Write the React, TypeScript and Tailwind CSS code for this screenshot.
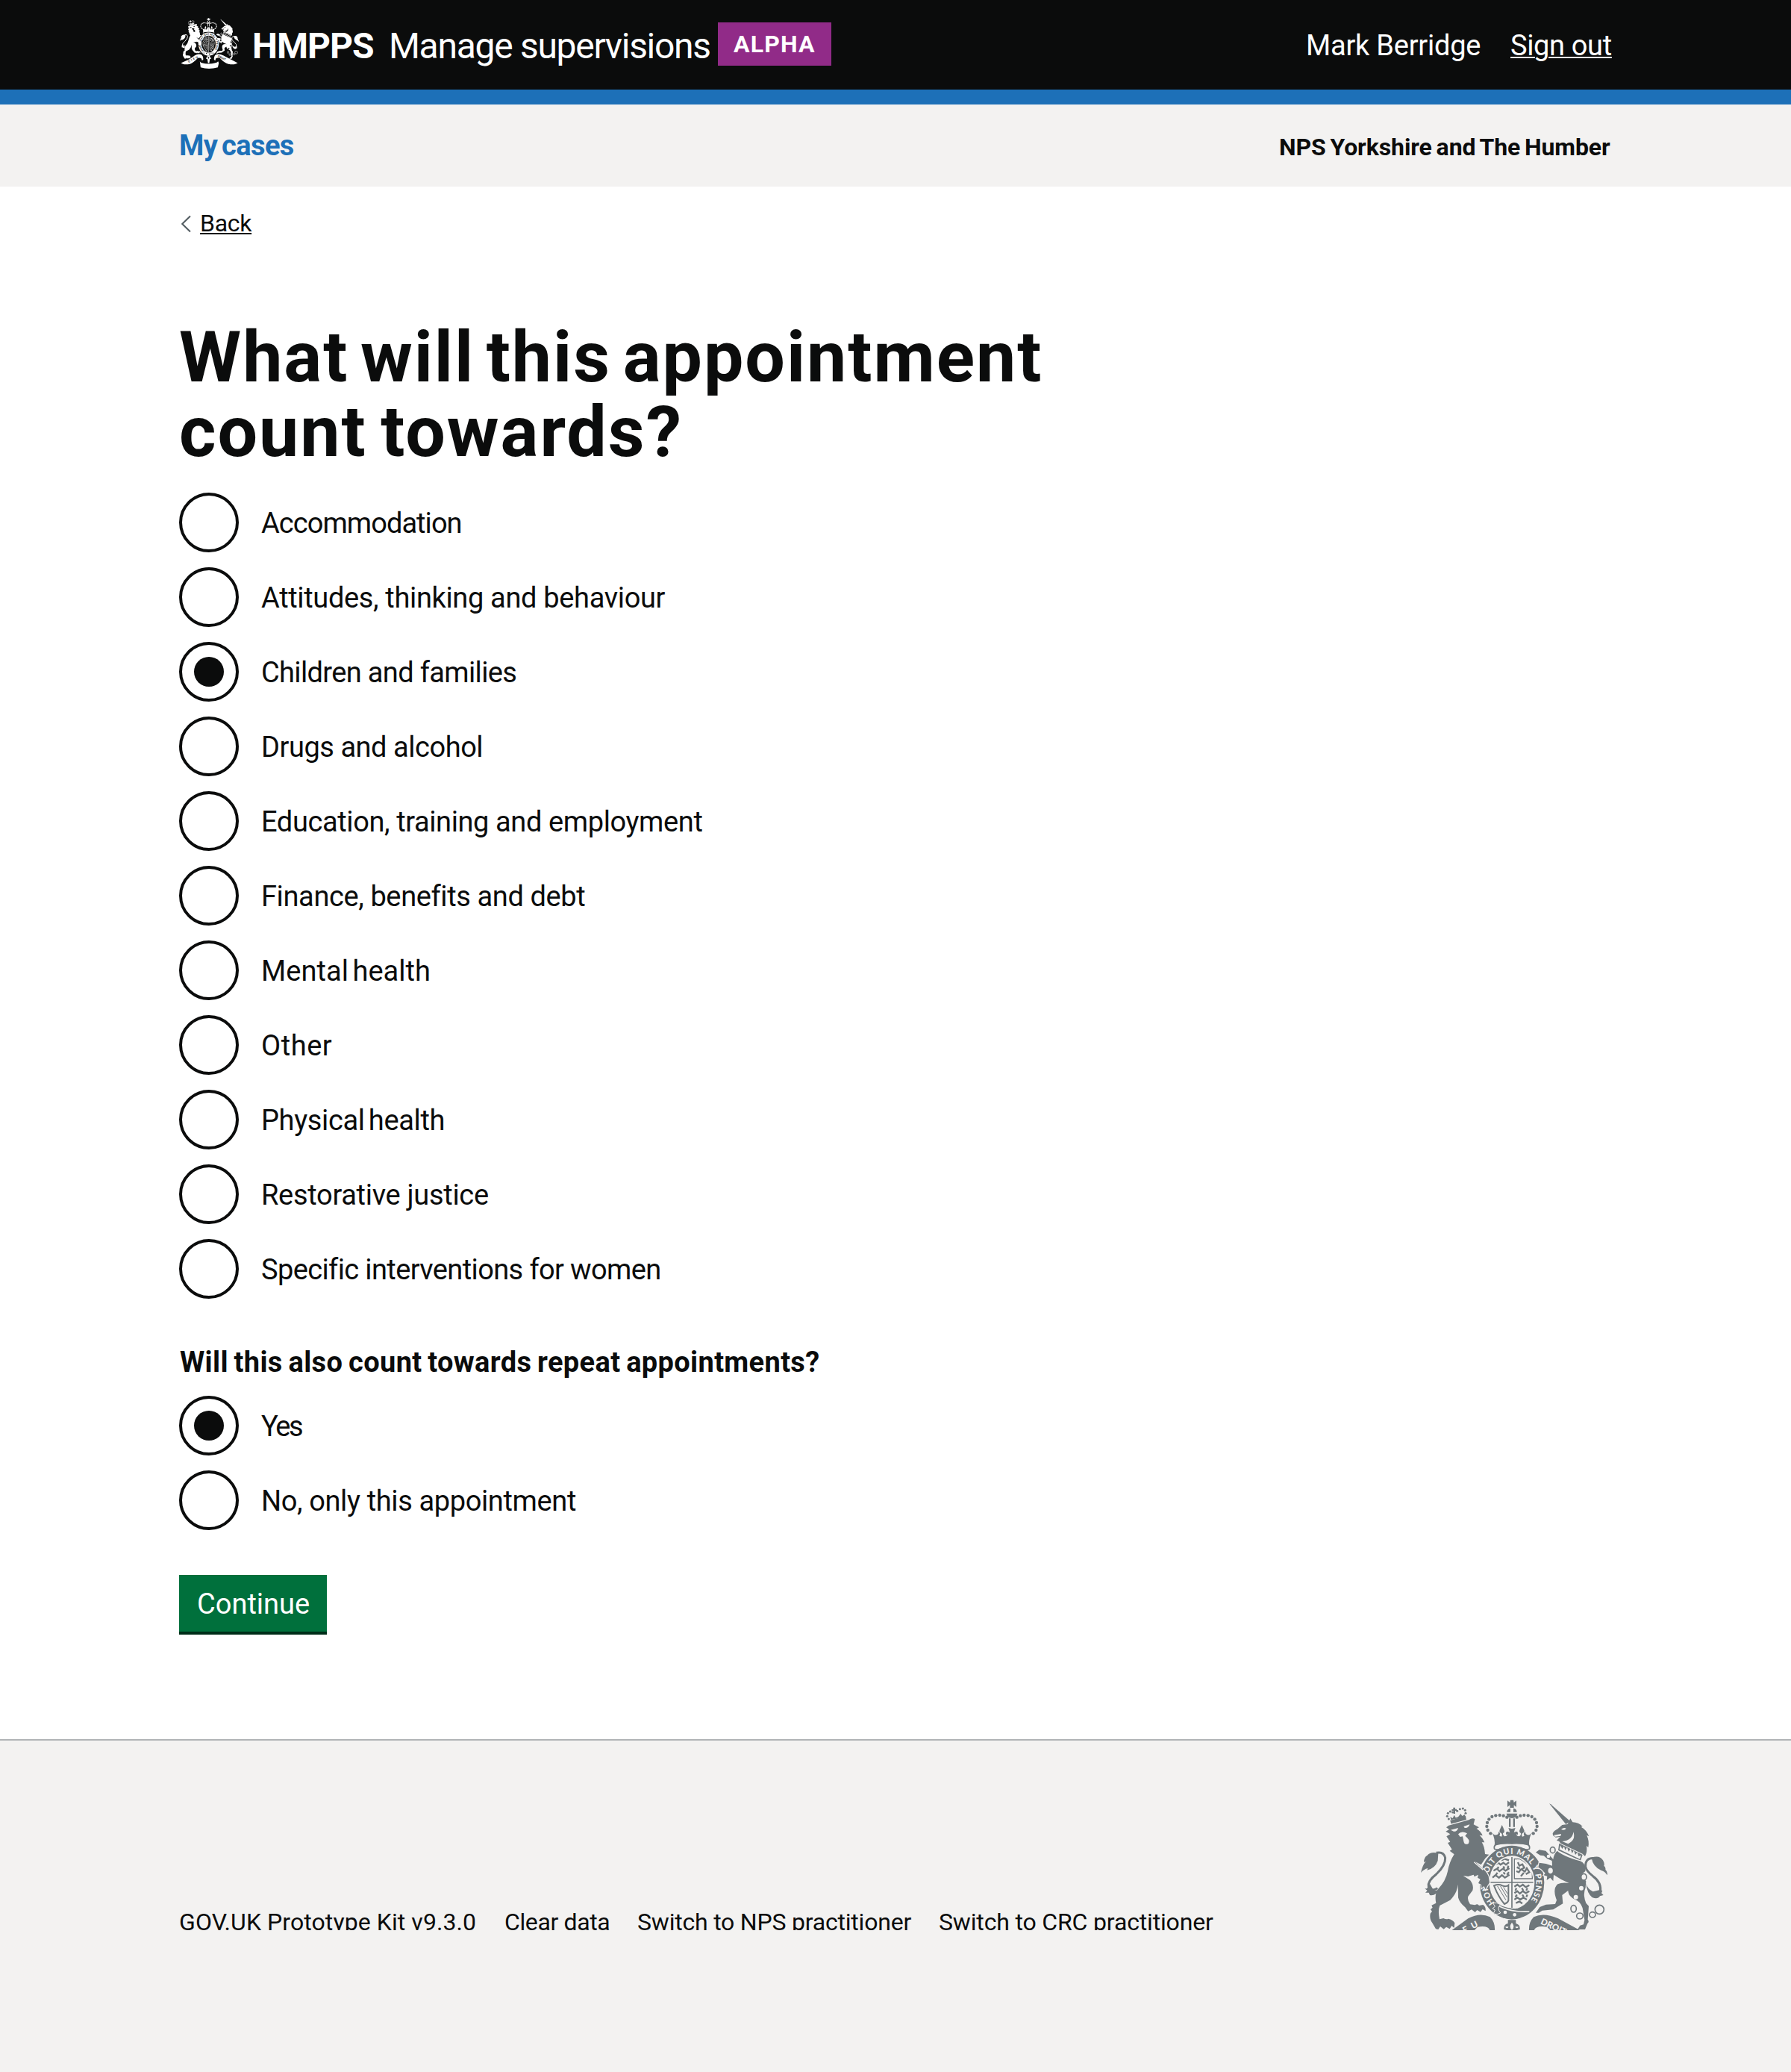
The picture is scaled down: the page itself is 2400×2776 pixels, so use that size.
type Choice = { label: string; tracking: string; checked?: boolean };

const needs: Choice[] = [
  { label: "Accommodation", tracking: "tracking-[-0.95px]" },
  { label: "Attitudes, thinking and behaviour", tracking: "tracking-[-0.34px]" },
  { label: "Children and families", tracking: "tracking-[-0.65px]", checked: true },
  { label: "Drugs and alcohol", tracking: "tracking-[-0.46px]" },
  { label: "Education, training and employment", tracking: "tracking-[-0.39px]" },
  { label: "Finance, benefits and debt", tracking: "tracking-[-0.38px]" },
  { label: "Mental health", tracking: "tracking-[0.05px] [word-spacing:-4px]" },
  { label: "Other", tracking: "tracking-[0.55px]" },
  { label: "Physical health", tracking: "tracking-[-0.35px] [word-spacing:-4px]" },
  { label: "Restorative justice", tracking: "tracking-[-0.3px]" },
  { label: "Specific interventions for women", tracking: "tracking-[-0.62px]" },
];

const repeats: Choice[] = [
  { label: "Yes", tracking: "tracking-[-2.4px]", checked: true },
  { label: "No, only this appointment", tracking: "tracking-[-0.37px]" },
];

function Radios({ items }: { items: Choice[] }) {
  return (
    <div className="flex flex-col gap-5">
      {items.map((c) => (
        <label key={c.label} className="flex h-20 gap-[30px]">
          <span className="flex size-20 shrink-0 items-center justify-center rounded-full border-4 border-[#0b0c0c]">
            {c.checked && <span className="size-10 rounded-full bg-[#0b0c0c]" />}
          </span>
          <span className={"text-[38px] leading-[82px] whitespace-nowrap " + c.tracking}>{c.label}</span>
        </label>
      ))}
    </div>
  );
}

// Beads along the left arch of the central crown; the right arch is their mirror image.
const beads = [
  [352, 200], [341, 187], [337, 172], [339, 157], [346, 143], [358, 133], [373, 128], [389, 127], [404, 129], [418, 135],
];

function HalfCrown() {
  return (
    <>
      {beads.map(([x, y]) => (
        <circle key={x + "-" + y} cx={x} cy={y} r="6.5" />
      ))}
      <path d="M358 196 Q364 208 376 206 Q386 203 384 192 Q394 198 388 210 L396 213 Q402 203 394 198 Q386 196 389 186 Q394 176 398 166 Q404 178 407 187 Q410 196 402 199 Q400 206 408 212 Q420 212 420 203 L415 206 Q411 194 420 192 L430 196 L424 178 L439 182 V243 Q400 240 368 249 Q372 225 358 196Z" />
    </>
  );
}

function RoyalArms({ id, paper, className }: { id: string; paper: string; className: string }) {
  return (
    <svg viewBox="72 64 750 648" className={className} fill="currentColor" aria-hidden="true">
      <defs>
        <path id={id + "-garter"} d="M369 479 A98 115 0 1 1 507 478" />
        <path id={id + "-dieu"} d="M182 636 L322 564" />
        <path id={id + "-droit"} d="M551 563 L720 640" />
        <clipPath id={id + "-shield"}>
          <ellipse cx="438" cy="397" rx="86" ry="102" />
        </clipPath>
      </defs>

      {/* garter and quartered shield */}
      <ellipse cx="438" cy="397" rx="130" ry="148" />
      <ellipse cx="438" cy="397" rx="91" ry="107" fill={paper} />
      <text fill={paper} fontFamily="Lato" fontWeight="900" fontSize="32">
        <textPath href={"#" + id + "-garter"} textLength="500" lengthAdjust="spacing">
          HONI SOIT QUI MAL Y PENSE
        </textPath>
      </text>
      <g clipPath={"url(#" + id + "-shield)"} fill="none" stroke="currentColor">
        <path strokeWidth="5" d="M438 285 V505 M345 397 H535" />
        <path strokeWidth="7" d="M372 326 l12 -8 l8 8 l12 -8 l10 8 l12 -10 M364 350 l14 -8 l10 10 l14 -10 l10 8 l16 -10 M360 378 l12 -10 l14 10 l12 -10 l12 10 l18 -12 M384 334 l-4 10 M404 332 l4 10 M424 330 l-4 12 M380 358 l-6 8 M404 356 l6 8 M426 356 l-8 10 M396 308 l12 -6 l18 6" />
        <path strokeWidth="7" d="M448 414 l12 -8 l10 8 l12 -8 l12 10 l14 -8 M448 440 l12 -8 l10 10 l12 -10 l12 8 l14 -8 M448 466 l12 -8 l12 8 l12 -8 l14 8 M456 420 l-4 10 M478 420 l6 10 M500 420 l-4 10 M458 446 l-6 10 M480 446 l6 10 M500 446 l-4 10 M454 480 l14 -6 l12 8" />
        <path strokeWidth="4" d="M448 302 V382 H520 V352 Q506 320 470 303 Z" />
        <path strokeWidth="7" d="M462 316 l6 14 l12 -6 l8 14 l-12 6 l14 10 l8 -14 l10 16 l-14 8 M474 344 l-8 12 l-10 -4 M486 358 l-12 14 M458 336 l12 6" />
        <path strokeWidth="6" d="M366 410 Q384 402 400 410 Q414 416 424 408 V470 Q420 480 408 484 Q384 456 366 410Z" />
        <path strokeWidth="3" d="M380 412 L414 468 M392 412 L418 456 M404 416 L420 442" />
      </g>
      <path d="M380 484 Q430 508 500 506 L508 518 Q470 548 430 545 Q396 540 374 524Z" />
      <path fill="none" stroke={paper} strokeWidth="5" d="M378 488 Q430 518 508 514" />
      <path stroke={paper} strokeWidth="3" d="M362 480 Q378 476 392 486 Q376 500 392 520 Q378 530 364 522 L370 508 L360 502 L370 494Z" />
      <circle cx="411" cy="517" r="7" fill={paper} />
      <circle cx="449" cy="527" r="7" fill={paper} />

      {/* lion: crown, head, body */}
      <path d="M190 148 L252 130 L255 146 L194 164Z" />
      <path d="M193 146 L190 134 L200 139 L206 126 L212 137 L222 134 L232 121 L238 130 L248 124 L252 134Z" />
      {[[178, 131], [181, 119], [190, 112], [200, 115], [218, 110], [229, 102], [241, 100], [250, 107], [252, 119], [184, 142]].map(([x, y]) => (
        <circle key={x + "-" + y} cx={x} cy={y} r="4.6" />
      ))}
      <path d="M202 96 h8 v6 h6 v7 h-6 v12 h-7 v-12 h-7 v-6 h6z" />
      <path
        stroke={paper}
        strokeWidth="7"
        paintOrder="stroke"
        d="M174 176 L184 168 L265 146 Q280 136 289 143 L284 164 L306 176 L296 181 Q314 192 320 209 L308 207 Q322 220 328 236 L317 236 Q328 252 330 283 L346 285 L331 300 L314 326 L291 314 L318 340 Q334 350 344 372 L348 398 L340 410 L332 425 L326 412 L316 420 L315 406 L303 400 L311 384 L300 378 L303 366 L287 374 L284 366 L262 373 L242 370 L270 388 Q286 408 280 429 L262 453 Q258 468 270 485 L290 488 Q300 480 306 490 L322 487 Q334 494 332 512 L320 505 L312 516 L298 508 L290 517 L276 506 L262 513 L250 497 Q228 480 222 458 L221 405 Q218 440 190 468 L148 490 Q140 510 147 545 L163 541 Q175 548 182 543 Q200 546 208 560 L206 580 L196 571 L188 584 L174 576 L164 585 L150 574 L142 586 L132 584 L118 560 Q106 545 110 522 L117 513 L111 506 L119 498 L115 489 L133 480 Q126 446 141 424 Q172 392 180 352 Q186 316 206 284 L188 270 L197 264 L180 238 L190 234 L175 212 L190 203 L172 192 L186 184Z"
      />
      <path fill={paper} d="M192 186 L222 178 Q218 194 204 192Z M244 172 L268 164 Q264 180 248 178Z M222 203 Q236 188 258 200 L250 210 Q272 226 264 240 Q248 250 244 232 L240 212 L230 214Z" />
      <path fill="none" stroke={paper} strokeWidth="4" d="M286 315 L322 347" />

      {/* lion's tail */}
      <path fill="none" stroke="currentColor" strokeWidth="9" d="M139 420 Q112 436 103 414 Q98 392 134 364 Q172 328 170 298 Q164 272 134 278" />
      <path d="M142 280 Q112 272 98 288 Q84 296 84 316 L92 312 Q78 328 72 358 Q84 344 100 340 L97 348 Q130 340 140 310Z" />
      <path d="M108 402 L96 422 L88 422 L98 430 L90 438 L104 438 L108 448 Q132 452 146 428 L124 430Z" />

      {/* central crown */}
      <path d="M420 68 L430 76 L432 66 H444 L446 76 L456 68 V94 L446 86 V97 H430 V86 L420 94Z" />
      <path d="M418 112 Q420 101 432 99 V114 H418Z M444 99 Q457 101 458 114 H444Z" />
      <path d="M416 120 H460 Q458 138 438 139 Q418 138 416 120Z" />
      <path d="M426 140 h7 v34 h-7z M443 140 h7 v34 h-7z" />
      <HalfCrown />
      <g transform="translate(876 0) scale(-1 1)">
        <HalfCrown />
      </g>
      <path fill="none" stroke="currentColor" strokeWidth="5" d="M374 244 Q364 252 368 263 Q380 268 392 262 M502 244 Q512 252 508 263 Q496 268 484 262" />

      {/* unicorn: horn, head, body */}
      <path d="M588 80 L594 83 L673 152 L655 163Z" />
      <path d="M602 200 Q606 190 622 182 L640 166 L662 163 L673 140 L682 155 Q706 156 722 172 L716 174 Q736 184 748 211 L739 208 Q750 232 745 256 L738 250 Q742 274 732 292 L722 282 L634 240 L628 232 L618 228 L632 214 L614 216 L603 208Z" />
      <path fill={paper} d="M636 184 Q646 174 656 180 Q650 190 636 184Z M640 232 Q682 228 685 194 Q696 226 664 242Z M606 207 L636 202 L634 210 L612 213Z" />
      <path d="M628 240 L722 286 L714 310 L624 268Z" />
      <path fill={paper} d="M633 248 L640 262 L648 252 L652 268 L660 256 L666 274 L674 262 L680 280 L687 268 L693 286 L701 276 L706 292 L716 288 L711 303 L629 264Z" />
      <path
        stroke={paper}
        strokeWidth="7"
        paintOrder="stroke"
        d="M620 270 Q640 290 712 311 Q738 322 733 352 L716 366 L736 392 L734 418 Q722 446 736 480 L747 492 L743 546 Q750 556 742 562 L732 586 H702 L712 570 L726 566 L730 548 L722 500 Q714 474 692 466 Q664 452 664 430 L640 448 L643 482 L604 506 L560 510 L546 519 H534 L550 496 L575 486 L612 484 L618 468 Q600 424 622 404 Q640 396 668 400 Q634 386 606 366 L604 392 L592 378 L578 388 L580 372 L566 368 L572 360 L556 344 L544 336 L548 318 L575 322 L600 330 L599 310 L580 302 L566 290 L552 288 L534 276 L548 266 L574 270 L604 304 Q606 284 620 270Z"
      />
      <g fill={paper}>
        <circle cx="717" cy="420" r="9" />
        <circle cx="695" cy="456" r="9" />
        <circle cx="585" cy="292" r="7" />
      </g>
      <g fill={paper} stroke="currentColor" strokeWidth="5">
        <ellipse cx="602" cy="267" rx="10" ry="12" />
        <ellipse cx="593" cy="350" rx="12" ry="14" />
        <ellipse cx="727" cy="375" rx="11" ry="13" />
        <ellipse cx="686" cy="503" rx="11" ry="14" />
        <ellipse cx="711" cy="532" rx="13" ry="12" />
        <ellipse cx="762" cy="527" rx="12" ry="11" />
        <circle cx="790" cy="506" r="18" />
      </g>

      {/* unicorn's tail */}
      <path fill="none" stroke="currentColor" strokeWidth="9" d="M770 300 Q732 296 734 334 Q738 352 764 372 Q800 398 793 436" />
      <path d="M758 298 Q790 286 804 308 Q812 322 808 330 Q816 336 814 346 Q824 354 821 368 Q812 352 796 348 Q764 334 758 298Z" />
      <path d="M736 400 Q742 424 764 434 L789 428 L802 430 L798 440 L806 448 L792 452 Q784 466 762 458 Q740 442 736 400Z" />

      {/* motto scroll and pendant */}
      <path d="M84 640 L190 594 L262 542 Q310 516 350 536 Q374 560 368 600 L350 606 Q356 566 300 576 Q240 640 200 652 Q140 664 110 652Z" />
      <path d="M810 640 L720 594 L624 542 Q566 516 526 536 Q502 560 508 600 L526 606 Q520 566 580 576 Q640 640 690 652 Q750 664 780 652Z" />
      <path d="M326 620 Q340 650 438 650 Q530 650 560 620 L568 640 L556 696 Q440 726 336 696Z" />
      <path d="M422 548 H454 V562 Q472 566 470 586 L454 590 L446 640 H430 L422 590 L406 586 Q404 566 422 562Z" />
      <path fill={paper} d="M438 558 Q452 576 438 588 Q424 576 438 558Z M412 575 a6 6 0 1 0 12 0z M452 575 a6 6 0 1 0 12 0z" />
      <g fill={paper} fontFamily="Lato" fontWeight="900" fontSize="35">
        <text>
          <textPath href={"#" + id + "-dieu"} textLength="138">DIEU</textPath>
        </text>
        <text>
          <textPath href={"#" + id + "-droit"}>DROIT</textPath>
        </text>
      </g>
    </svg>
  );
}

export default function App() {
  return (
    <div className="min-h-[2776px] w-[2400px] bg-white font-['Roboto',sans-serif] text-[#0b0c0c]">
      <header className="border-b-[20px] border-[#1d70b8] bg-[#0b0c0c] text-white">
        <div className="mx-auto flex h-[120px] w-[1920px] items-start whitespace-nowrap">
          <RoyalArms id="header" paper="#0b0c0c" className="mt-6 ml-px h-[68px] w-[79px]" />
          <div className="mt-[38px] ml-[18px] w-[183px] text-[48px] leading-[48px] font-bold tracking-[-0.95px]">HMPPS</div>
          <div className="mt-[38px] w-[441px] text-[48px] leading-[48px] tracking-[-1.29px]">Manage supervisions</div>
          <strong className="mt-[30px] h-[58px] w-[152px] bg-[#912b88] pl-[21px] text-[32px] leading-[58px] font-bold tracking-[1.17px]">
            ALPHA
          </strong>
          <div className="mt-[41px] ml-auto w-[274px] text-[38px] leading-10 tracking-[-0.22px]">Mark Berridge</div>
          <a className="mt-[41px] w-[136px] text-[38px] leading-10 tracking-[-0.35px] underline decoration-2 underline-offset-2">Sign out</a>
        </div>
      </header>

      <nav className="bg-[#f3f2f1]">
        <div className="mx-auto flex h-[110px] w-[1920px] items-start justify-between whitespace-nowrap">
          <a className="mt-[35px] text-[38px] leading-10 font-bold tracking-[-0.6px] text-[#1d70b8] [word-spacing:-3px]">My cases</a>
          <div className="mt-[41px] w-[446px] text-[32px] leading-8 font-bold tracking-[-0.1px] [word-spacing:-2px]">
            NPS Yorkshire and The Humber
          </div>
        </div>
      </nav>

      <main className="mx-auto flex w-[1920px] flex-col items-start">
        <a className="mt-[33px] flex h-8 items-start">
          <svg viewBox="0 0 16 24" className="mt-[5px] h-6 w-4" fill="none" stroke="#505a5f" strokeWidth="2">
            <path d="M15 1.5 L4.2 12 L15 22.5" />
          </svg>
          <span className="ml-3 text-[32px] leading-8 tracking-[-0.3px] underline decoration-2 underline-offset-2">Back</span>
        </a>

        <h1 className="mt-[114px] text-[95px] leading-[100px] font-bold whitespace-nowrap">
          <span className="block tracking-[2px] [word-spacing:-10px]">What will this appointment</span>
          <span className="block tracking-[2px] [word-spacing:-7px]">count towards?</span>
        </h1>

        <div className="mt-[31px]">
          <Radios items={needs} />
        </div>

        <h2 className="mt-[65px] ml-px text-[38px] leading-10 font-bold tracking-[0.35px] whitespace-nowrap [word-spacing:-2px]">
          Will this also count towards repeat appointments?
        </h2>
        <div className="mt-[25px]">
          <Radios items={repeats} />
        </div>

        <button className="mt-[60px] h-20 w-[198px] border-b-4 border-[#002d18] bg-[#00703c] pl-6 text-left text-[38px] leading-[78px] text-white">
          Continue
        </button>
      </main>

      <footer className="mt-[140px] h-[446px] border-t-2 border-[#b1b4b6] bg-[#f3f2f1]">
        <div className="mx-auto flex h-[254px] w-[1920px] items-start overflow-hidden whitespace-nowrap">
          <div className="flex pt-[227px] text-[32px] leading-8">
            <a className="w-[436px] tracking-[0.08px]">GOV.UK Prototype Kit v9.3.0</a>
            <a className="w-[178px] tracking-[-0.37px]">Clear data</a>
            <a className="w-[404px] tracking-[-0.21px]">Switch to NPS practitioner</a>
            <a className="tracking-[-0.16px]">Switch to CRC practitioner</a>
          </div>
          <RoyalArms id="footer" paper="#f3f2f1" className="mt-[79px] mr-[6px] ml-auto h-[216px] w-[250px] shrink-0 text-[#6f777b]" />
        </div>
      </footer>
    </div>
  );
}
